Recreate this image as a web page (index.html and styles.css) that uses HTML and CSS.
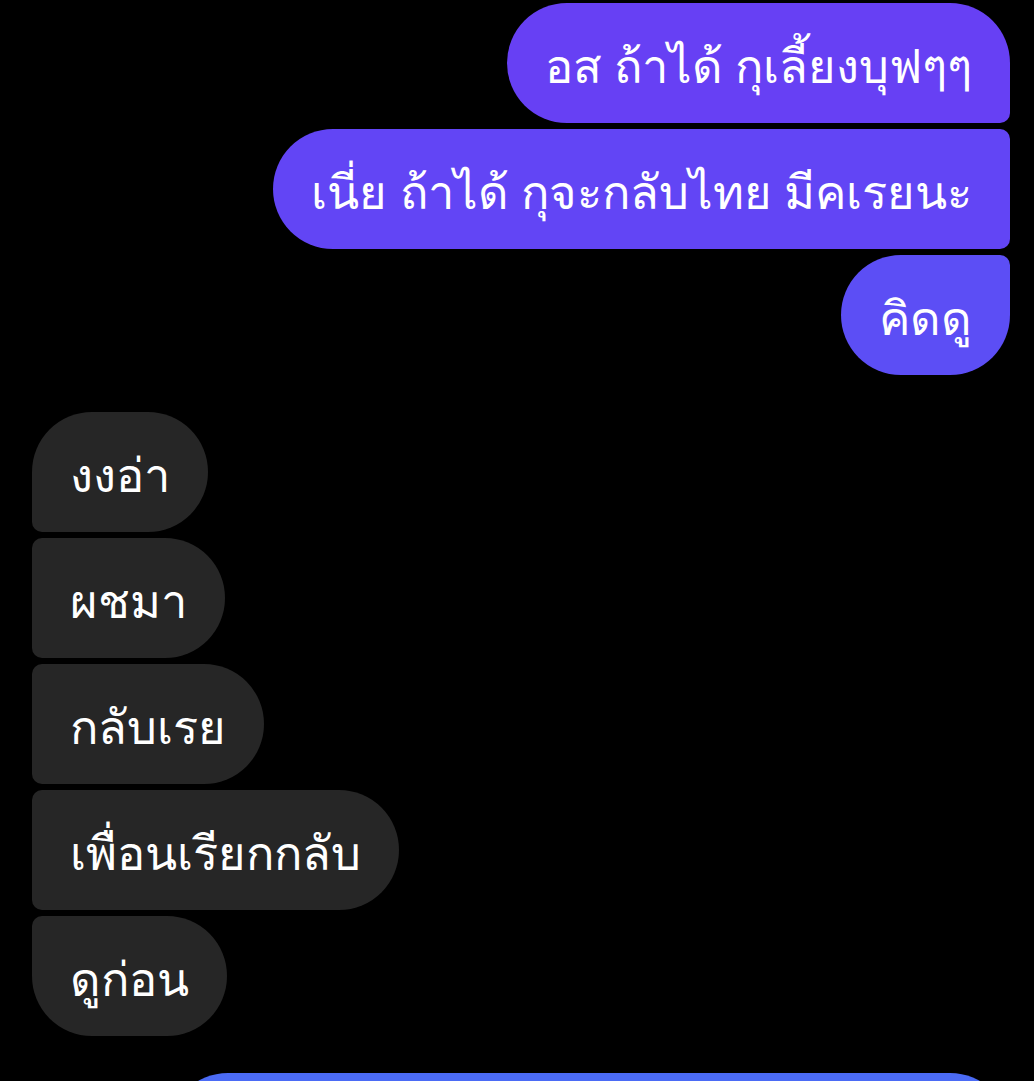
FILE: index.html
```html
<!DOCTYPE html>
<html lang="th">
<head>
  <meta charset="UTF-8" />
  <title>แชท</title>
  <link rel="stylesheet" href="styles.css">
</head>
<body>
  <div class="chat">

    <!-- ข้อความที่ส่ง -->
    <div class="group sent">
      <div class="bubble first tone-1">อส ถ้าได้ กุเลี้ยงบุฟๆๆ</div>
      <div class="bubble tone-2">เนี่ย ถ้าได้ กุจะกลับไทย มีคเรยนะ</div>
      <div class="bubble last tone-3">คิดดู</div>
    </div>

    <!-- ข้อความที่ได้รับ -->
    <div class="group received">
      <div class="bubble first">งงอ่า</div>
      <div class="bubble">ผชมา</div>
      <div class="bubble">กลับเรย</div>
      <div class="bubble">เพื่อนเรียกกลับ</div>
      <div class="bubble last">ดูก่อน</div>
    </div>

    <!-- ข้อความถัดไป (ถูกตัดที่ขอบล่าง) -->
    <div class="group sent">
      <div class="bubble first tone-4">&nbsp;</div>
    </div>

  </div>
</body>
</html>
```

FILE: styles.css
```css
/* ======= GENERAL ======= */
body {
  margin: 0;
  padding: 0;
  background: #000;
  font-family: "Noto Sans", sans-serif;
  color: #fff;
  overflow: hidden;
}

.chat {
  display: flex;
  flex-direction: column;
  gap: 37px;
  padding: 3px 24px 0 32px;
}

/* ======= GROUPS ======= */
.group {
  display: flex;
  flex-direction: column;
  gap: 6px;
}
.group.sent {
  align-items: flex-end;
}
.group.received {
  align-items: flex-start;
}

/* ======= BUBBLES ======= */
.bubble {
  box-sizing: border-box;
  height: 120px;
  display: flex;
  align-items: center;
  padding: 6px 38px 0;
  font-size: 47px;
  white-space: nowrap;
}

.sent .bubble {
  border-radius: 60px 10px 10px 60px;
}
.sent .bubble.first {
  border-top-right-radius: 60px;
}
.sent .bubble.last {
  border-bottom-right-radius: 60px;
}

.received .bubble {
  background: #262626;
  border-radius: 10px 60px 60px 10px;
}
.received .bubble.first {
  border-top-left-radius: 60px;
}
.received .bubble.last {
  border-bottom-left-radius: 60px;
}

/* gradient tones like messenger */
.tone-1 { background: #6740f4; }
.tone-2 { background: #6245f5; }
.tone-3 { background: #5c4ef5; }
.tone-4 { background: #4b6bf5; width: 842px; }
```
